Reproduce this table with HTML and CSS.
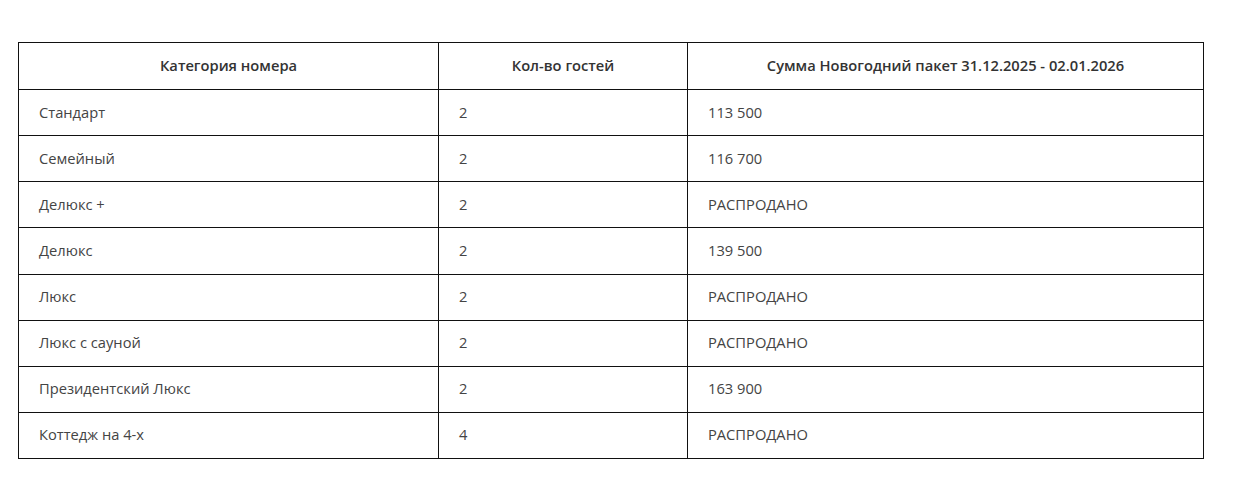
FILE: index.html
```html
<!DOCTYPE html>
<html lang="ru">
<head>
<meta charset="utf-8">
<link rel="stylesheet" href="styles.css">
</head>
<body>
<div class="wrap">
<table class="price">
  <colgroup>
    <col class="c1"><col class="c2"><col class="c3">
  </colgroup>
  <thead>
    <tr><th>Категория номера</th><th>Кол-во гостей</th><th>Сумма Новогодний пакет 31.12.2025 - 02.01.2026</th></tr>
  </thead>
  <tbody>
    <tr><td>Стандарт</td><td>2</td><td>113 500</td></tr>
    <tr><td>Семейный</td><td>2</td><td>116 700</td></tr>
    <tr><td>Делюкс +</td><td>2</td><td>РАСПРОДАНО</td></tr>
    <tr><td>Делюкс</td><td>2</td><td>139 500</td></tr>
    <tr><td>Люкс</td><td>2</td><td>РАСПРОДАНО</td></tr>
    <tr><td>Люкс с сауной</td><td>2</td><td>РАСПРОДАНО</td></tr>
    <tr><td>Президентский Люкс</td><td>2</td><td>163 900</td></tr>
    <tr><td>Коттедж на 4-х</td><td>4</td><td>РАСПРОДАНО</td></tr>
  </tbody>
</table>
</div>
</body>
</html>
```
FILE: styles.css
```css
html, body {
  margin: 0;
  padding: 0;
  background: #fff;
}
.wrap {
  padding: 42px 0 0 18px;
}
.price {
  border-collapse: collapse;
  width: 1185px;
  table-layout: fixed;
  font-family: "Open Sans", "Liberation Sans", sans-serif;
  font-size: 14.7px;
  color: #444;
}
.c1 { width: 420px; }
.c2 { width: 249px; }
.c3 { width: 516px; }
.price th, .price td {
  border: 1px solid #111;
  padding: 0 20px 2px;
  text-align: left;
  vertical-align: middle;
}
.price th {
  height: 44px;
  font-weight: 600;
  color: #333;
  text-align: center;
}
.price td {
  height: 43.125px;
}
```
